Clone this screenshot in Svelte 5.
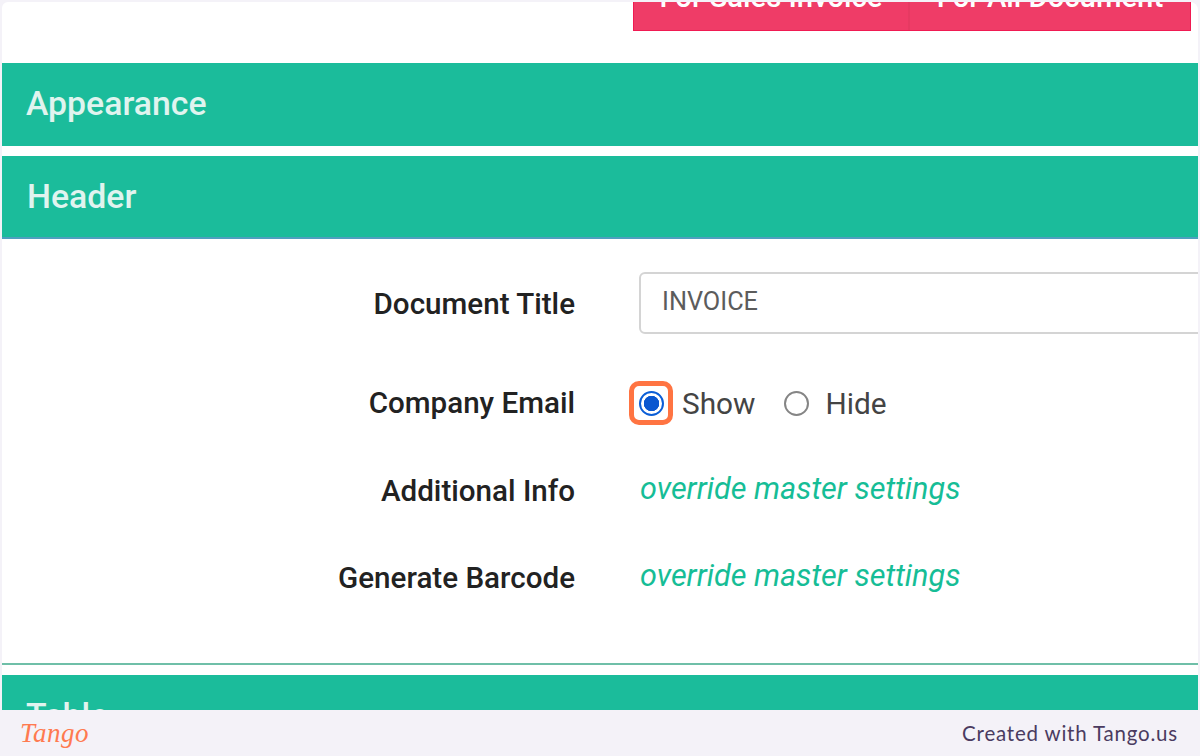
<script>
  const rows = [
    { label: 'Additional Info' },
    { label: 'Generate Barcode' }
  ];
</script>

<div class="frame">
  <div class="page">
    <div class="top-actions">
      <div class="btn-group">
        <div class="btn first"><span>For Sales Invoice</span></div>
        <div class="btn"><span>For All Document</span></div>
      </div>
    </div>

    <div class="bar appearance">Appearance</div>
    <div class="bar header">Header</div>

    <div class="form">
      <div class="row title-row">
        <div class="label">Document Title</div>
        <div class="field"><div class="input">INVOICE</div></div>
      </div>
      <div class="row email-row">
        <div class="label">Company Email</div>
        <div class="field radios">
          <span class="highlight"><span class="radio on"></span></span>
          <span class="opt">Show</span>
          <span class="radio off"></span>
          <span class="opt">Hide</span>
        </div>
      </div>
      {#each rows as row}
        <div class="row link-row">
          <div class="label">{row.label}</div>
          <div class="field"><span class="link">override master settings</span></div>
        </div>
      {/each}
    </div>

    <div class="divider"></div>
    <div class="bar table">Table</div>
  </div>

  <footer class="footer">
    <span class="logo">Tango</span>
    <span class="credit">Created with Tango.us</span>
  </footer>
</div>

<style>
  :global(body) {
    margin: 0;
    background: #f4f2f8;
  }

  .frame {
    width: 1200px;
    height: 756px;
    display: flex;
    flex-direction: column;
    overflow: hidden;
    background: #f4f2f8;
    font-family: Roboto, "Liberation Sans", sans-serif;
  }

  .page {
    height: 708px;
    flex: none;
    margin: 2px 2px 0 2px;
    background: #fff;
    border-top-left-radius: 6px;
    border-top-right-radius: 8px;
    overflow: hidden;
  }

  .top-actions {
    height: 61px;
    display: flex;
    justify-content: flex-end;
    padding-right: 7px;
    box-sizing: border-box;
  }

  .btn-group {
    height: 29px;
    width: 558px;
    display: flex;
    overflow: hidden;
    background: #ef3c67;
    border: solid #f01a52;
    border-width: 0 1px 1px 1px;
    box-sizing: border-box;
  }

  .btn {
    flex: 1;
    height: 28px;
    display: flex;
    align-items: flex-end;
    justify-content: center;
    color: #fff;
    font-size: 29.3px;
    font-weight: 500;
    line-height: 20px;
  }

  .btn span {
    white-space: nowrap;
    margin-bottom: 23px;
  }

  .first {
    border-right: 2px solid #e63a62;
    flex: 0 0 274px;
  }

  .bar {
    background: #1bbc9b;
    color: #e0f4ef;
    font-size: 33.8px;
    font-weight: 500;
    box-sizing: border-box;
    padding-left: 24px;
    display: flex;
    align-items: center;
  }

  .appearance {
    height: 83px;
    margin-bottom: 10px;
    padding-bottom: 3px;
  }

  .header {
    height: 83px;
    padding-left: 25px;
    padding-bottom: 1px;
    border-bottom: 2px solid #4f9fc0;
  }

  .form {
    height: 424px;
    box-sizing: border-box;
    padding-top: 33px;
  }

  .row {
    display: flex;
    align-items: center;
  }

  .label {
    width: 573px;
    flex: none;
    text-align: right;
    font-size: 29.6px;
    font-weight: 500;
    color: #222;
    padding-top: 2px;
  }

  .field {
    margin-left: 64px;
    flex: 1;
    min-width: 0;
  }

  .title-row {
    height: 62px;
    margin-bottom: 46px;
  }

  .input {
    height: 62px;
    box-sizing: border-box;
    margin-right: -10px;
    border: 2px solid #d4d4d4;
    border-radius: 6px;
    padding: 0 0 4px 21px;
    display: flex;
    align-items: center;
    font-size: 25.3px;
    color: #5c5c5c;
  }

  .radios {
    display: flex;
    align-items: center;
    margin-left: 54px;
    font-size: 29.8px;
    color: #444;
    position: relative;
    top: 1px;
  }

  .email-row {
    height: 44px;
    margin-bottom: 44px;
  }

  .highlight {
    width: 44px;
    height: 44px;
    box-sizing: border-box;
    border: 5px solid #ff7442;
    border-radius: 10px;
    display: flex;
    align-items: center;
    justify-content: center;
    margin-right: 9px;
  }

  .radio {
    width: 25px;
    height: 25px;
    box-sizing: border-box;
    border-radius: 50%;
    display: block;
    flex: none;
  }

  .on {
    border: 2px solid #0b5ed7;
    background: radial-gradient(circle, #0b57d0 0 7.5px, #fff 8px);
  }

  .off {
    border: 2px solid #858585;
    margin: 0 17px 0 28px;
  }

  .link-row {
    height: 44px;
    margin-bottom: 43px;
  }

  .link {
    color: #16bd96;
    font-size: 30.6px;
    font-style: italic;
    position: relative;
    top: -2px;
    left: 1px;
  }

  .divider {
    height: 2px;
    background: #6fbfa8;
    margin-bottom: 10px;
  }

  .table {
    height: 60px;
    align-items: flex-start;
    padding-top: 23px;
    line-height: 36px;
  }

  .footer {
    flex: 1;
    display: flex;
    align-items: center;
    justify-content: space-between;
    padding: 0 22px 0 20px;
  }

  .logo {
    font-family: "Liberation Serif", serif;
    font-style: italic;
    font-size: 27px;
    color: #ff7a50;
    letter-spacing: 0.5px;
  }

  .credit {
    font-family: Lato, sans-serif;
    font-size: 20.5px;
    letter-spacing: 0.8px;
    color: #4a3b60;
  }
</style>
